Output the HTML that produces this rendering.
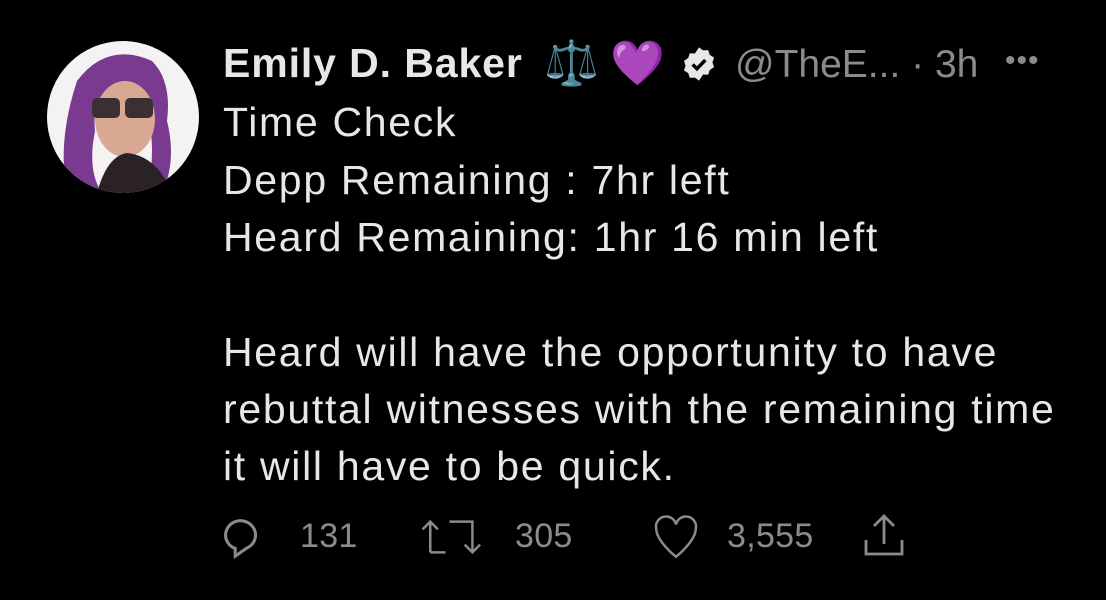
<!DOCTYPE html>
<html><head><meta charset="utf-8"><style>
html,body{margin:0;padding:0;background:#000;width:1106px;height:600px;overflow:hidden}
body{font-family:"Liberation Sans",sans-serif;color:#e7e7e7;position:relative}
.av{position:absolute;left:47px;top:41px;width:152px;height:152px;border-radius:50%;background:#f4f2f3;overflow:hidden}
.t{position:absolute;left:223px;font-size:41px;letter-spacing:1.7px;white-space:nowrap;line-height:1}
.g{color:#8b8b8b}
.a{position:absolute;top:519px;font-size:34px;letter-spacing:0.3px;color:#8b8b8b;line-height:1}
svg{position:absolute}
</style></head><body>
<div class="av">
<svg width="152" height="152" viewBox="0 0 152 152">
<path d="M30 40 Q60 0 105 20 Q125 40 120 80 Q130 120 115 152 L100 152 Q110 110 100 70 Q90 45 60 50 Q45 60 48 90 Q40 130 55 152 L20 152 Q10 100 30 40Z" fill="#7a3a8f"/>
<ellipse cx="78" cy="78" rx="30" ry="38" fill="#d8a892"/>
<rect x="45" y="57" width="28" height="20" rx="5" fill="#3a3033"/>
<rect x="78" y="57" width="28" height="20" rx="5" fill="#3a3033"/>
<path d="M50 152 Q60 115 80 112 Q110 115 125 152Z" fill="#2a2226"/>
</svg></div>
<div class="t" style="top:43px;font-weight:bold;letter-spacing:0.9px">Emily D. Baker</div>
<div class="t" style="top:42px;left:544px;font-size:44px;letter-spacing:0">⚖️</div>
<div class="t" style="top:42px;left:610px;font-size:44px;letter-spacing:0">💜</div>
<svg style="left:680px;top:45px" width="38" height="38" viewBox="0 0 24 24"><path d="M12 1.5l2.6 1.9 3.2-.2 1 3 2.7 1.8-1 3 1 3-2.7 1.8-1 3-3.2-.2L12 22.5l-2.6-1.9-3.2.2-1-3L2.5 16l1-3-1-3 2.7-1.8 1-3 3.2.2z" fill="#e7e7e7"/><path d="M8 12.3l2.7 2.7L16 9.5" stroke="#000" stroke-width="2.2" fill="none"/></svg>
<div class="t g" style="top:45px;left:735px;font-size:39px;letter-spacing:0">@TheE... · 3h</div>
<div class="t g" style="top:46px;left:1005px;font-size:30px;letter-spacing:1px">•••</div>
<div class="t" style="top:102px">Time Check</div>
<div class="t" style="top:160px">Depp Remaining : 7hr left</div>
<div class="t" style="top:217px">Heard Remaining: 1hr 16 min left</div>
<div class="t" style="top:332px">Heard will have the opportunity to have</div>
<div class="t" style="top:389px">rebuttal witnesses with the remaining time</div>
<div class="t" style="top:446px">it will have to be quick.</div>
<svg style="left:217px;top:514px" width="46" height="46" viewBox="0 0 24 24" fill="none" stroke="#8b8b8b" stroke-width="1.6"><path d="M12 3.5a8 7.5 0 0 1 3.5 14.3L9.5 22v-4a7.8 7.5 0 0 1 2.5-14.5z"/></svg>
<div class="a" style="left:300px">131</div>
<svg style="left:420px;top:514px" width="78" height="46" viewBox="0 0 40 24" fill="none" stroke="#8b8b8b" stroke-width="1.3"><path d="M5 20V4M1 8l4-4 4 4M5 20h8M19 4h8v16M23 16l4 4 4-4M15 4h4"/></svg>
<div class="a" style="left:515px">305</div>
<svg style="left:651px;top:514px" width="50" height="46" viewBox="0 0 24 22" fill="none" stroke="#8b8b8b" stroke-width="1.2"><path d="M12 20.5S2.5 13 2.5 7A4.7 4.7 0 0 1 12 5a4.7 4.7 0 0 1 9.5 2c0 6-9.5 13.5-9.5 13.5z"/></svg>
<div class="a" style="left:727px">3,555</div>
<svg style="left:860px;top:512px" width="48" height="48" viewBox="0 0 24 24" fill="none" stroke="#8b8b8b" stroke-width="1.4"><path d="M12 2v14M7 7l5-5 5 5M3 14v7h18v-7"/></svg>
</body></html>
